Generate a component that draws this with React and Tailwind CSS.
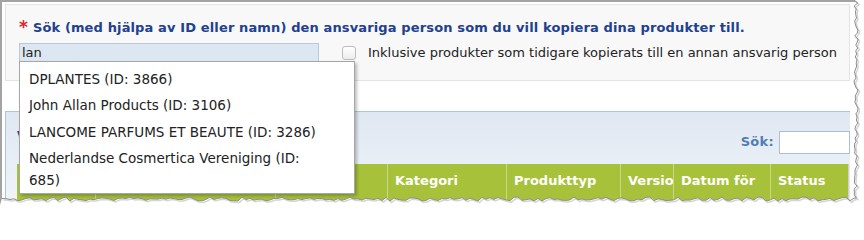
import React from 'react';

const options = [
    ['DPLANTES (ID: 3866)'],
    ['John Allan Products (ID: 3106)'],
    ['LANCOME PARFUMS ET BEAUTE (ID: 3286)'],
    ['Nederlandse Cosmertica Vereniging (ID:', '685)'],
];

const columns = [
    { label: '', w: 'w-[78px]' },
    { label: '', w: 'w-[180px]' },
    { label: '', w: 'w-[112px]' },
    { label: 'Kategori', w: 'w-[119px]' },
    { label: 'Produkttyp', w: 'w-[114px]' },
    { label: 'Versio', w: 'w-[53px]' },
    { label: 'Datum för', w: 'w-[97px]' },
    { label: 'Status', w: 'w-[78px]' },
];

// jagged torn-paper edge along right and bottom
const jitter = (i) => ((Math.sin(i * 12.9898) * 43758.5453) % 1 + 1) % 1;

const TornEdge = () => {
    const right = [];
    for (let y = 0, i = 0; y <= 198; y += 3, i++) {
        right.push([854 + jitter(i) * 4, y]);
    }
    const bottom = [];
    for (let x = 854, i = 100; x >= 0; x -= 4, i++) {
        bottom.push([x, 197 + jitter(i) * 4]);
    }
    const edge = [...right, ...bottom];
    const line = edge.map(([x, y]) => `${x.toFixed(1)},${y.toFixed(1)}`).join(' ');
    const fill = `864,0 ${line} 0,205 864,205`;
    const shadow = edge.map(([x, y]) => `${(x + 1.5).toFixed(1)},${(y + 1.5).toFixed(1)}`).join(' ');
    return (
        <svg className="absolute inset-0 pointer-events-none" width="864" height="205">
            <polygon points={fill} fill="#ffffff" />
            <polyline points={shadow} fill="none" stroke="#d4d4d4" strokeWidth="1.5" />
            <polyline points={line} fill="none" stroke="#8c8c8c" strokeWidth="1" />
        </svg>
    );
};

const App = () => {
    return (
        <div className="relative w-[864px] h-[205px] bg-white overflow-hidden font-['DejaVu_Sans',Verdana,sans-serif]">
            <div className="h-full w-[858px] border-l-2 border-t-2 border-[#a3a3a3] pl-[3px] pt-[2px]">
                <div className="w-[845px] h-[77px] bg-[#f8f8f8] border border-[#e3e3e3] pl-[13px] pt-[13px]">
                    <div className="flex items-center h-[20px]">
                        <span className="text-[#e3242b] text-[17px] font-bold leading-none mr-[5px] mt-[-2px]">*</span>
                        <span className="text-[#21408f] text-[13px] font-bold tracking-[0.13px]">
                            Sök (med hjälpa av ID eller namn) den ansvariga person som du vill kopiera dina produkter till.
                        </span>
                    </div>
                    <div className="flex items-center mt-[5px]">
                        <div className="w-[300px] h-[19px] bg-[#dde7f2] border border-[#b9c9dc] text-[13px] text-[#222] leading-[17px] pl-[2px]">
                            lan
                        </div>
                        <div className="ml-[23px] w-[14px] h-[14px] rounded-[3px] border border-[#bcbcbc] bg-gradient-to-b from-white to-[#ececec]" />
                        <span className="ml-[12px] text-[13px] text-[#222]">
                            Inklusive produkter som tidigare kopierats till en annan ansvarig person
                        </span>
                    </div>
                </div>

                <div className="h-[30px]" />

                <div className="w-[845px] h-[100px] border-t border-l border-[#a9c6de] bg-gradient-to-b from-[#dfe7f2] to-[#f3f6fa] pl-[11px]">
                    <div className="relative flex items-center h-[52px]">
                        <span className="text-[#21408f] text-[15px] font-bold">Valda produkter</span>
                        <div className="ml-auto flex items-center pt-[8px]">
                            <span className="text-[#4f7db6] text-[13px] font-bold tracking-[0.3px] mr-[5px]">Sök:</span>
                            <div className="w-[71px] h-[23px] bg-white border border-[#a8bfd7]" />
                        </div>
                    </div>
                    <div className="flex h-[40px]">
                        <div className="flex bg-[#a7c23a] w-[831px]">
                            {columns.map((c, i) => (
                                <div
                                    key={i}
                                    className={`${c.w} ${i > 0 ? 'border-l border-[#c8da8a]' : ''} pl-[7px] pt-[7px] text-white text-[13px] font-bold whitespace-nowrap overflow-hidden`}
                                >
                                    {c.label}
                                </div>
                            ))}
                        </div>
                        <div className="w-[10px] bg-[#e7e7e7] border-l border-[#d0d0d0]" />
                    </div>
                </div>
            </div>

            <div className="absolute left-[19px] top-[61px] w-[336px] bg-white border border-[#a6a6a6] shadow-[2px_2px_3px_rgba(0,0,0,0.25)] pt-[3px]">
                {options.map((lines) => (
                    <div key={lines[0]} className="pl-[9px] pr-[14px] pt-[2.5px] pb-[2px] text-[13.5px] leading-[22px] text-[#222]">
                        {lines.map((l, i) => (
                            <div key={i}>{l}</div>
                        ))}
                    </div>
                ))}
            </div>

            <TornEdge />
        </div>
    );
};

export default App;
